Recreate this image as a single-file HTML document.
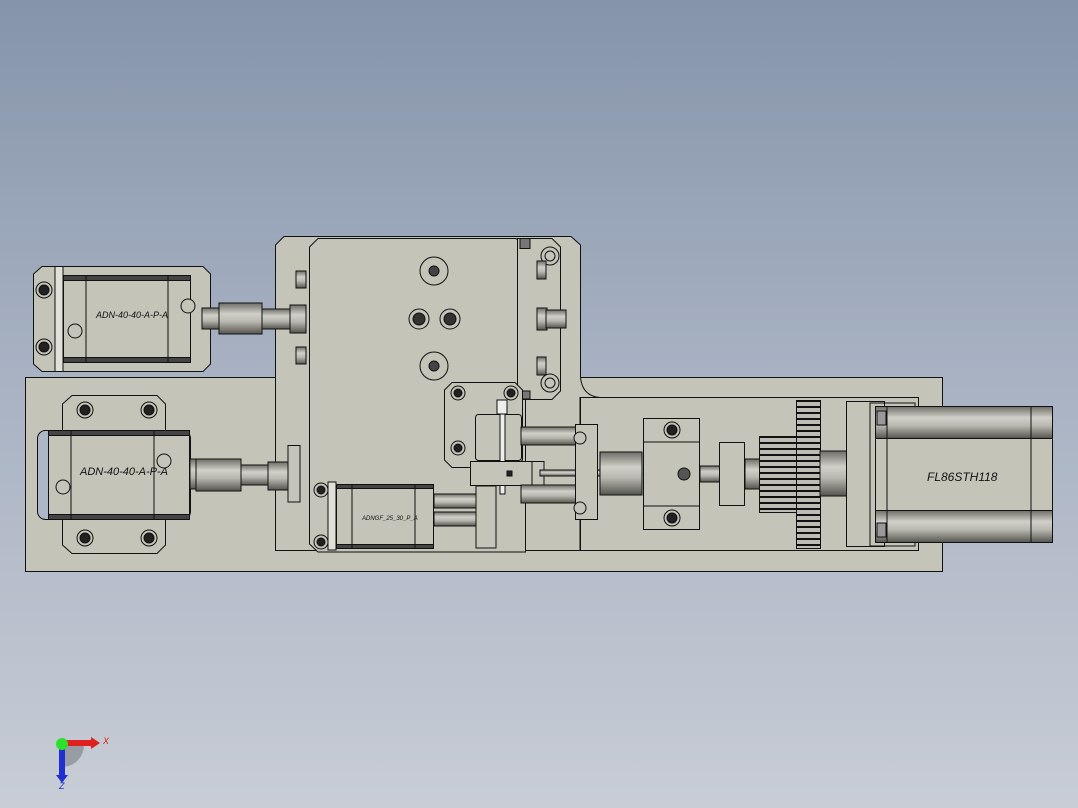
<!DOCTYPE html>
<html><head><meta charset="utf-8"><style>
html,body{margin:0;padding:0;}
body{width:1078px;height:808px;overflow:hidden;background:linear-gradient(#8594aa 0%,#a7b1c2 45%,#c8cdd6 100%);}
svg{display:block}
text{font-family:"Liberation Sans",sans-serif;font-style:italic}
</style></head><body>
<svg width="1078" height="808" viewBox="0 0 1078 808" xmlns="http://www.w3.org/2000/svg">
<defs>
<linearGradient id="cyl" x1="0" y1="0" x2="0" y2="1">
<stop offset="0" stop-color="#6e6e68"/><stop offset=".35" stop-color="#d0d0c8"/><stop offset=".6" stop-color="#b8b8b0"/><stop offset="1" stop-color="#55554f"/></linearGradient>
<linearGradient id="gear" x1="0" y1="0" x2="0" y2="1">
<stop offset="0" stop-color="#444"/><stop offset=".5" stop-color="#ccc"/><stop offset="1" stop-color="#444"/></linearGradient>
<pattern id="teeth" width="4" height="6" patternUnits="userSpaceOnUse"><rect width="4" height="6" fill="#bdbdb5"/><rect y="4" width="4" height="2" fill="#111"/></pattern>
</defs>
<g stroke="#111" stroke-width="1" fill="#c4c4b9">
<!-- bottom plate -->
<rect x="25.5" y="377.5" width="917" height="194"/>
<!-- upper plate -->
<path d="M284 236.5 H571 L580.5 245 V377 Q582 396 600 397.5 H580 V550.5 H275.5 V245 Z"/>
<rect x="580.5" y="397.5" width="338" height="153" fill="none"/>
<!-- inner plate -->
<path d="M318 238.5 H516 L525.5 247 V552 H318 L309.5 544 V247 Z"/>
<!-- right bracket -->
<path d="M517.5 238.5 H552 L560.5 247 V391 L552 399.5 H517.5 Z"/>
<rect x="520" y="238.5" width="10" height="10" fill="#777"/>
<rect x="520" y="391" width="10" height="8" fill="#777"/>
<circle cx="550" cy="256" r="9"/><circle cx="550" cy="256" r="5"/>
<circle cx="550" cy="383" r="9"/><circle cx="550" cy="383" r="5"/>
<rect x="537" y="261" width="9" height="18" fill="url(#cyl)"/>
<rect x="537" y="357" width="9" height="18" fill="url(#cyl)"/>
<rect x="537" y="308" width="10" height="22" fill="url(#cyl)"/>
<rect x="546" y="310" width="20" height="18" fill="url(#cyl)"/>
<!-- screws on inner plate -->
<circle cx="434" cy="271" r="14"/><circle cx="434" cy="271" r="5" fill="#444"/>
<circle cx="434" cy="366" r="14"/><circle cx="434" cy="366" r="5" fill="#444"/>
<circle cx="419" cy="319" r="10"/><circle cx="419" cy="319" r="6" fill="#333"/>
<circle cx="450" cy="319" r="10"/><circle cx="450" cy="319" r="6" fill="#333"/>
<!-- left side nubs -->
<rect x="296" y="271" width="10" height="17" fill="url(#cyl)"/>
<rect x="296" y="347" width="10" height="17" fill="url(#cyl)"/>
<!-- mount plate right-lower -->
<path d="M452 382.5 H515 L522.5 390 V460 L515 467.5 H452 L444.5 460 V390 Z"/>
<circle cx="458" cy="393" r="7"/><circle cx="458" cy="393" r="4" fill="#222"/>
<circle cx="511" cy="393" r="7"/><circle cx="511" cy="393" r="4" fill="#222"/>
<circle cx="458" cy="448" r="7"/><circle cx="458" cy="448" r="4" fill="#222"/>
<!-- top left cylinder -->
<path d="M42 266.5 H203 L210.5 274 V364 L203 371.5 H42 L33.5 364 V274 Z"/>
<rect x="55" y="266.5" width="8" height="105" fill="#e0e0d8"/>
<rect x="63.5" y="275.5" width="127" height="87"/>
<rect x="63.5" y="275.5" width="127" height="5" fill="#444"/>
<rect x="63.5" y="357.5" width="127" height="5" fill="#444"/>
<line x1="86" y1="276" x2="86" y2="362"/><line x1="168" y1="276" x2="168" y2="362"/>
<circle cx="44" cy="290" r="8"/><circle cx="44" cy="290" r="5" fill="#222"/>
<circle cx="44" cy="347" r="8"/><circle cx="44" cy="347" r="5" fill="#222"/>
<circle cx="188" cy="306" r="7"/><circle cx="75" cy="331" r="7"/>
<rect x="202" y="308" width="18" height="21" fill="url(#cyl)"/>
<rect x="219" y="303" width="43" height="31" fill="url(#cyl)"/>
<rect x="262" y="309" width="30" height="20" fill="url(#cyl)"/>
<rect x="290" y="305" width="16" height="28" fill="url(#cyl)"/>
<!-- bottom left cylinder -->
<path d="M72 395.5 H157 L165.5 404 V545 L157 553.5 H72 L62.5 545 V404 Z"/>
<rect x="37.5" y="430.5" width="153" height="89" fill="#aeb7c7" rx="8"/>
<rect x="48.5" y="430.5" width="141" height="89"/>
<rect x="48.5" y="430.5" width="141" height="5" fill="#444"/>
<rect x="48.5" y="514.5" width="141" height="5" fill="#444"/>
<line x1="71" y1="431" x2="71" y2="519"/><line x1="154" y1="431" x2="154" y2="519"/>
<circle cx="85" cy="410" r="8"/><circle cx="85" cy="410" r="5" fill="#222"/>
<circle cx="149" cy="410" r="8"/><circle cx="149" cy="410" r="5" fill="#222"/>
<circle cx="85" cy="538" r="8"/><circle cx="85" cy="538" r="5" fill="#222"/>
<circle cx="149" cy="538" r="8"/><circle cx="149" cy="538" r="5" fill="#222"/>
<circle cx="63" cy="487" r="7"/><circle cx="164" cy="461" r="7"/>
<rect x="190" y="459" width="10" height="30" fill="url(#cyl)"/>
<rect x="196" y="459" width="45" height="32" fill="url(#cyl)"/>
<rect x="241" y="465" width="30" height="20" fill="url(#cyl)"/>
<rect x="268" y="462" width="20" height="28" fill="url(#cyl)"/>
<path d="M300 445.5 H288 V502 H300 Z"/>
<!-- small cylinder on bottom -->
<circle cx="321" cy="490" r="7"/><circle cx="321" cy="490" r="4" fill="#222"/>
<circle cx="321" cy="542" r="7"/><circle cx="321" cy="542" r="4" fill="#222"/>
<rect x="328" y="482" width="8" height="68" fill="#e0e0d8"/>
<rect x="336.5" y="484.5" width="97" height="64"/>
<rect x="336.5" y="484.5" width="97" height="4" fill="#444"/>
<rect x="336.5" y="544.5" width="97" height="4" fill="#444"/>
<line x1="352" y1="485" x2="352" y2="548"/><line x1="415" y1="485" x2="415" y2="548"/>
<rect x="434" y="494" width="42" height="14" fill="url(#cyl)"/>
<rect x="434" y="512" width="42" height="14" fill="url(#cyl)"/>
<!-- slider block -->
<rect x="475.5" y="414.5" width="46" height="46" rx="3"/>
<rect x="500" y="414" width="5" height="80" fill="#eee"/>
<rect x="470.5" y="461.5" width="62" height="24"/>
<rect x="532" y="461.5" width="12" height="24"/>
<rect x="507" y="471" width="5" height="5" fill="#222"/>
<rect x="476" y="486" width="20" height="62"/>
<rect x="497" y="400" width="10" height="14" fill="#eee"/>
<rect x="521" y="427" width="55" height="18" fill="url(#cyl)"/>
<rect x="521" y="485" width="55" height="18" fill="url(#cyl)"/>
<rect x="540" y="470" width="60" height="6" fill="url(#cyl)"/>
<rect x="575.5" y="424.5" width="22" height="95"/>
<circle cx="580" cy="438" r="6"/><circle cx="580" cy="508" r="6"/>
<!-- coupling -->
<rect x="600" y="452" width="42" height="43" fill="url(#cyl)"/>
<rect x="643.5" y="418.5" width="56" height="111"/>
<line x1="643" y1="442" x2="700" y2="442"/><line x1="643" y1="506" x2="700" y2="506"/>
<circle cx="672" cy="430" r="8"/><circle cx="672" cy="430" r="5" fill="#222"/>
<circle cx="672" cy="518" r="8"/><circle cx="672" cy="518" r="5" fill="#222"/>
<circle cx="684" cy="474" r="6" fill="#555"/>
<rect x="700" y="466" width="20" height="16" fill="url(#cyl)"/>
<rect x="719.5" y="442.5" width="25" height="63"/>
<rect x="745" y="459" width="15" height="30" fill="url(#cyl)"/>
<rect x="759.5" y="436.5" width="37" height="76" fill="url(#teeth)"/>
<rect x="796.5" y="400.5" width="24" height="148" fill="url(#teeth)"/>
<rect x="820" y="451" width="27" height="45" fill="url(#cyl)"/>
<!-- motor -->
<rect x="846.5" y="401.5" width="38" height="145"/>
<rect x="870" y="403" width="45" height="143" fill="none"/>
<rect x="875.5" y="406.5" width="177" height="136"/>
<rect x="875.5" y="406.5" width="177" height="32" fill="url(#cyl)"/>
<rect x="875.5" y="510.5" width="177" height="32" fill="url(#cyl)"/>
<line x1="887" y1="406" x2="887" y2="543"/><line x1="1031" y1="406" x2="1031" y2="543"/>
<rect x="877" y="411" width="9" height="14" fill="#999"/>
<rect x="877" y="523" width="9" height="14" fill="#999"/>
</g>
<g fill="#111" stroke="none">
<text x="96" y="318" font-size="9">ADN-40-40-A-P-A</text>
<text x="80" y="475" font-size="11">ADN-40-40-A-P-A</text>
<text x="362" y="520" font-size="6">ADNGF_25_30_P_A</text>
<text x="927" y="481" font-size="12" font-style="normal">FL86STH118</text>
</g>
<!-- triad -->
<path d="M62 745 h22 a22 22 0 0 1 -22 22 z" fill="#8d9099" opacity=".8"/>
<rect x="62" y="740" width="30" height="6" fill="#e02020"/>
<path d="M91 737 l9 6 l-9 6z" fill="#e02020"/>
<rect x="59" y="744" width="6" height="31" fill="#2030d0"/>
<path d="M56 775 h12 l-6 8z" fill="#2030d0"/>
<circle cx="62" cy="744" r="6" fill="#2de02d"/>
<text x="103" y="744" font-size="9" fill="#e02020" font-style="normal">X</text>
<text x="59" y="789" font-size="9" fill="#2030d0" font-style="normal">Z</text>
</svg>
</body></html>
